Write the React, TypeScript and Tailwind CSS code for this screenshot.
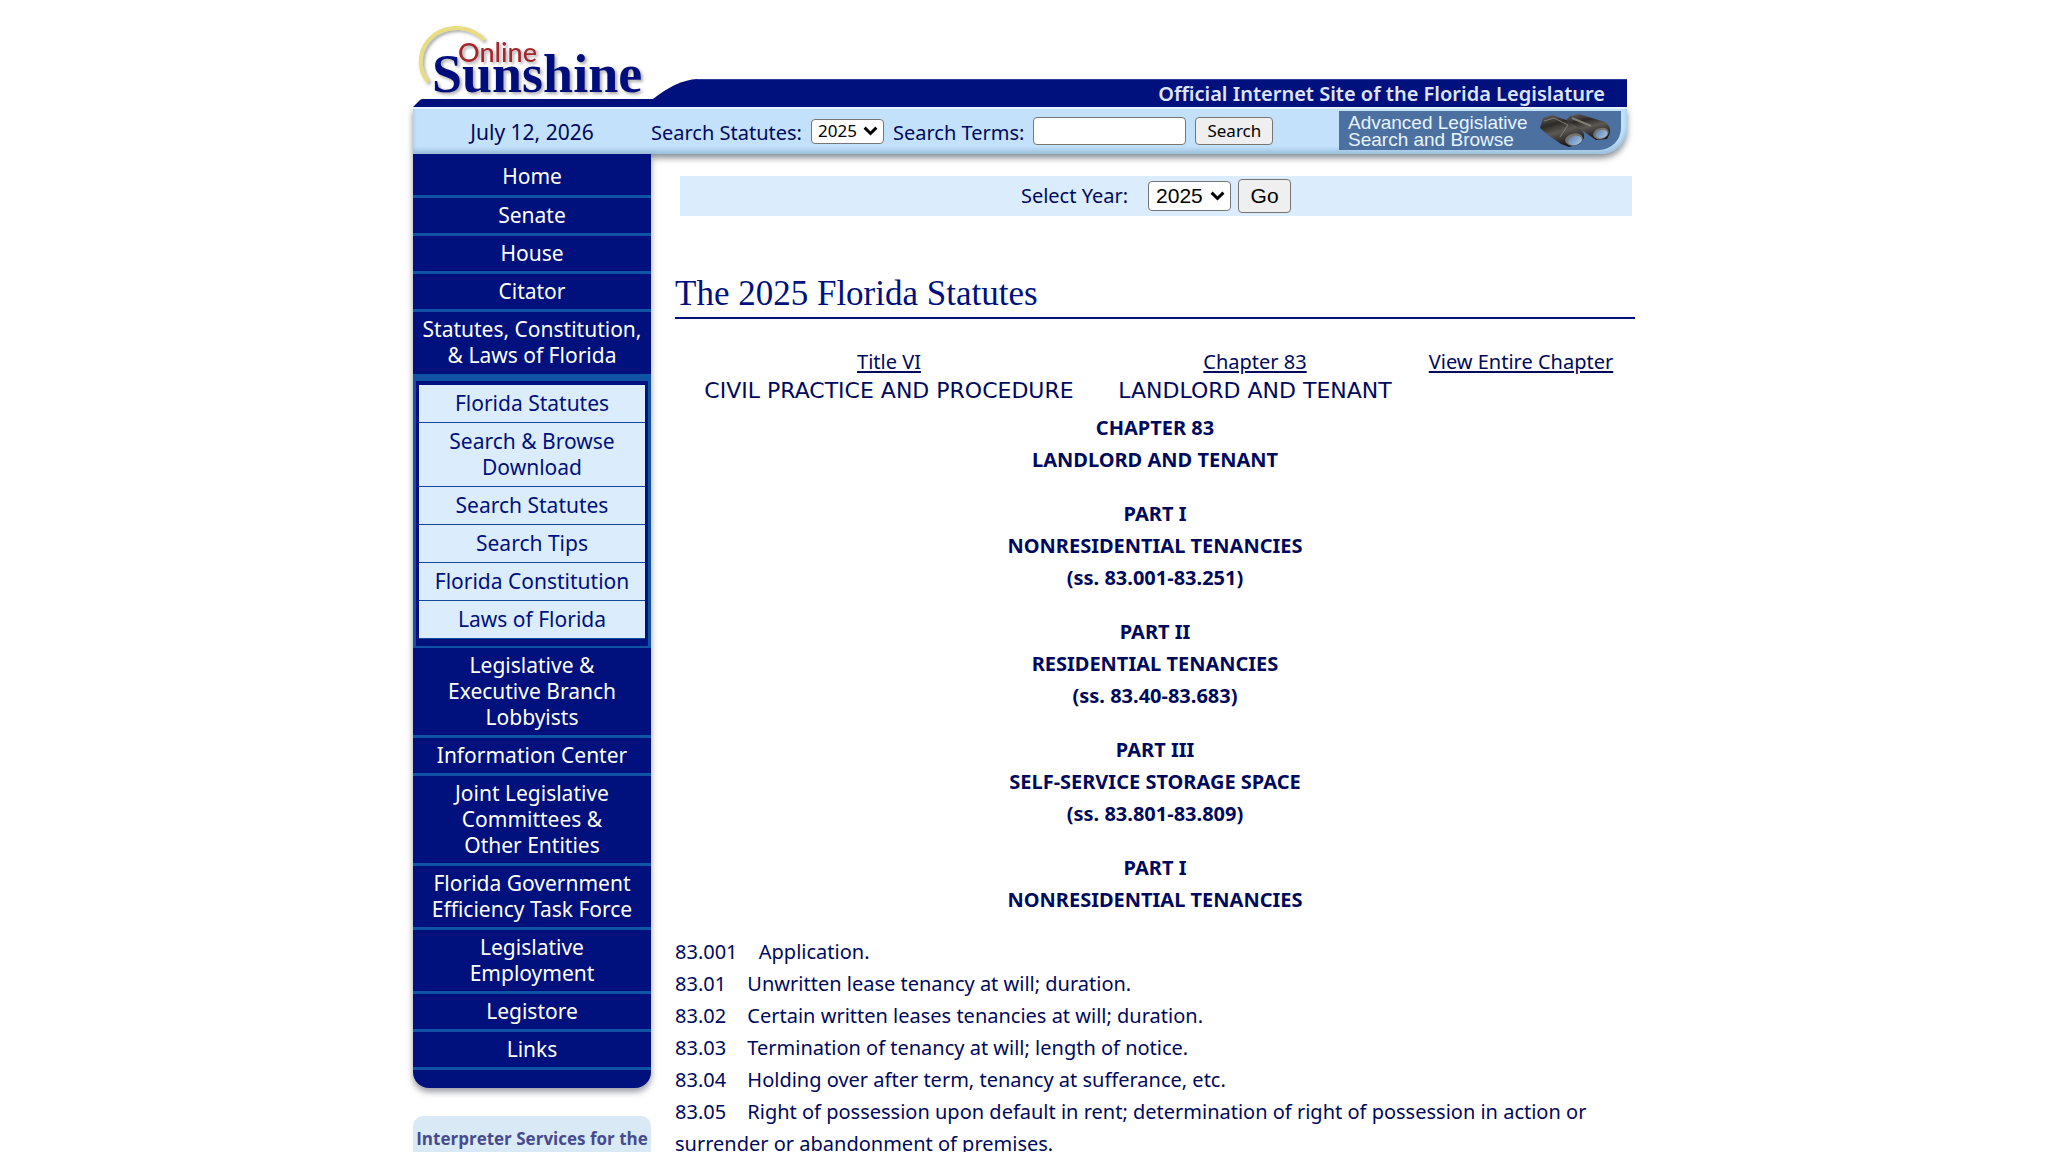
import type { ReactNode } from 'react';

const navTop: ReactNode[] = ['Senate', 'House', 'Citator'];
const subNav: ReactNode[] = [
  'Florida Statutes',
  <>Search &amp; Browse<br />Download</>,
  'Search Statutes',
  'Search Tips',
  'Florida Constitution',
  'Laws of Florida',
];
const navBottom: ReactNode[] = [
  <>Legislative &amp;<br />Executive Branch<br />Lobbyists</>,
  'Information Center',
  <>Joint Legislative<br />Committees &amp;<br />Other Entities</>,
  <>Florida Government<br />Efficiency Task Force</>,
  <>Legislative<br />Employment</>,
  'Legistore',
  'Links',
];
const parts: string[][] = [
  ['CHAPTER 83', 'LANDLORD AND TENANT'],
  ['PART I', 'NONRESIDENTIAL TENANCIES', '(ss. 83.001-83.251)'],
  ['PART II', 'RESIDENTIAL TENANCIES', '(ss. 83.40-83.683)'],
  ['PART III', 'SELF-SERVICE STORAGE SPACE', '(ss. 83.801-83.809)'],
  ['PART I', 'NONRESIDENTIAL TENANCIES'],
];
const sections: [string, string][] = [
  ['83.001', 'Application.'],
  ['83.01', 'Unwritten lease tenancy at will; duration.'],
  ['83.02', 'Certain written leases tenancies at will; duration.'],
  ['83.03', 'Termination of tenancy at will; length of notice.'],
  ['83.04', 'Holding over after term, tenancy at sufferance, etc.'],
  ['83.05', 'Right of possession upon default in rent; determination of right of possession in action or surrender or abandonment of premises.'],
];

function Chevron({ className }: { className: string }) {
  return (
    <svg viewBox="0 0 14 9" className={className} aria-hidden="true">
      <path d="M1.5 1.5 7 7l5.500-5.500" fill="none" stroke="#000" strokeWidth="2.800" />
    </svg>
  );
}

function YearSelect({ id, small }: { id: string; small?: boolean }) {
  return (
    <span className="relative inline-flex items-center">
      <select
        id={id}
        defaultValue="2025"
        className={
          small
            ? 'h-[25px] w-[73px] appearance-none rounded border border-[#767676] bg-white pl-[6px] font-["Noto_Sans",sans-serif] text-[17px] leading-5 text-black'
            : 'h-[30px] w-[83px] appearance-none rounded border border-[#767676] bg-white pl-[7px] font-["Liberation_Sans",sans-serif] text-[21px] leading-6 text-black'
        }
      >
        <option>2025</option>
        <option>2024</option>
        <option>2023</option>
      </select>
      <Chevron className="pointer-events-none absolute right-[6px] w-[15px]" />
    </span>
  );
}

function Logo() {
  return (
    <svg viewBox="0 0 240 80" className="block h-20 w-60 overflow-visible" role="img" aria-label="Online Sunshine">
      <defs>
        <filter id="soft" x="-10%" y="-20%" width="120%" height="150%">
          <feDropShadow dx="2" dy="2" stdDeviation="1.500" floodColor="#555" floodOpacity="0.5" />
        </filter>
      </defs>
      <g filter="url(#soft)">
        <path d="M15 63C3 48 6 28 21 16C37 5 58 7 71 21" fill="none" stroke="#e9dd84" strokeWidth="4" />
        <text x="45" y="43" fill="#a3282d" fontFamily="Lato, sans-serif" fontSize="27" fontWeight="500">Online</text>
        <text x="19" y="73" fill="#00107c" fontFamily="Liberation Serif, serif" fontSize="54" fontWeight="700">Sunshine</text>
      </g>
    </svg>
  );
}

function Binoculars() {
  return (
    <svg viewBox="0 0 72 34" className="h-[34px] w-[72px] shrink-0" aria-hidden="true">
      <defs>
        <linearGradient id="barrel" x1="0" y1="0" x2="0.400" y2="1">
          <stop offset="0" stopColor="#6b6762" />
          <stop offset="0.350" stopColor="#2c2927" />
          <stop offset="0.600" stopColor="#5c5853" />
          <stop offset="1" stopColor="#1d1b1a" />
        </linearGradient>
        <linearGradient id="lens" x1="0" y1="0" x2="1" y2="1">
          <stop offset="0" stopColor="#5f7fae" />
          <stop offset="1" stopColor="#a9c8ea" />
        </linearGradient>
      </defs>
      <path d="M26 7l5-5 9-2 26 8q6 4 5 11l-3 6-11 1-13-9-12-4z" fill="url(#barrel)" />
      <path d="M1 14L4 4l9-3 14 5 13 8q6 4 5 10l-4 6-11 3-8-3L9 21z" fill="url(#barrel)" />
      <path d="M5 7l10-3 14 7-8 12" fill="none" stroke="#817c74" />
      <path d="M33 4l19 8" fill="none" stroke="#817c74" strokeWidth="2" />
      <ellipse cx="35" cy="25.500" rx="9" ry="6" fill="#77736b" transform="rotate(-12 35 25.500)" />
      <ellipse cx="36" cy="26.500" rx="7" ry="4.500" fill="url(#lens)" transform="rotate(-12 36 26.500)" />
      <ellipse cx="62" cy="19.500" rx="8" ry="5.500" fill="#77736b" transform="rotate(-18 62 19.500)" />
      <ellipse cx="62.500" cy="20" rx="6" ry="4" fill="url(#lens)" transform="rotate(-18 62.500 20)" />
    </svg>
  );
}

function Header() {
  return (
    <header className="mr-[8px]">
      <div className="flex items-end">
        <div className="shrink-0 pt-[19px]">
          <Logo />
          <svg viewBox="0 0 240 8" className="block h-2 w-60" aria-hidden="true">
            <path d="M0 8L7 1Q8 0 10 0H240V8z" fill="#00107c" />
          </svg>
        </div>
        <svg viewBox="0 0 44 28" className="block h-7 w-11 shrink-0" aria-hidden="true">
          <path d="M0 20Q24 1 44 0V28H0z" fill="#00107c" />
        </svg>
        <div className="flex h-7 grow items-center justify-end border-t border-[#2c3c96] bg-[#00107c] pr-[22px] font-['Noto_Sans',sans-serif] text-[20px] leading-6 font-semibold text-[#dfe4ff]">
          Official Internet Site of the Florida Legislature
        </div>
      </div>
      <div className="flex h-[47px] items-start rounded-br-[26px] border-t-2 border-[#e4f3fd] bg-[#c3e1fa] shadow-[0_4px_6px_rgba(60,70,80,0.6),inset_0_-4px_4px_#9dc0de]">
        <div className="w-[238px] pt-1 text-center text-[21px] leading-[38px]">July 12, 2026</div>
        <form className="flex items-center gap-[9px] pt-[3px] leading-[34px]" onSubmit={(e) => e.preventDefault()}>
          <label htmlFor="header-year" className="pt-1">Search Statutes:</label>
          <YearSelect id="header-year" small />
          <label htmlFor="terms" className="pt-1">Search Terms:</label>
          <input id="terms" type="text" className="h-[28px] w-[153px] rounded border border-[#767676] bg-white px-1 text-[17px] text-black" />
          <button type="submit" className="h-[28px] w-[78px] rounded border border-[#767676] bg-[#efefef] text-[17px] leading-6 text-black">Search</button>
        </form>
        <a href="#advanced" className="mt-[2px] mr-[6px] ml-auto flex h-[39px] w-[282px] items-center justify-between rounded-br-[22px] bg-[#4c709f] pr-[10px] pl-[9px] font-['Liberation_Sans',sans-serif] text-[19px] leading-[17px] text-[#e8f4ff]">
          <span className="whitespace-nowrap">Advanced Legislative<br />Search and Browse</span>
          <Binoculars />
        </a>
      </div>
    </header>
  );
}

function NavItem({ children, first }: { children: ReactNode; first?: boolean }) {
  return (
    <li className="border-b-[3px] border-[#1053a5]">
      <a href="#nav" className={first ? 'block pt-[9px] pb-[6px]' : 'block pt-1 pb-[5px]'}>{children}</a>
    </li>
  );
}

function Sidebar() {
  return (
    <aside className="w-[238px] shrink-0 text-center text-[21px] leading-[26px]">
      <nav className="relative rounded-b-[16px] bg-[#00107c] pb-[18px] text-white shadow-[0_4px_6px_rgba(60,60,80,0.5)]">
        <ul>
          <NavItem first>Home</NavItem>
          {navTop.map((item, i) => <NavItem key={i}>{item}</NavItem>)}
          <li>
            <a href="#statutes" className="block whitespace-nowrap pt-1 pb-[6px]">Statutes, Constitution,<br />&amp; Laws of Florida</a>
            <ul className="border-x-[3px] border-t-[7px] border-b-2 border-[#1053a5] px-[3px] pt-1 pb-[7px] text-[#00107c]">
              {subNav.map((item, i) => (
                <li key={i} className="border-b border-[#124a98] bg-[#dbedfc]">
                  <a href="#sub" className="block pt-[5px] pb-[6px]">{item}</a>
                </li>
              ))}
            </ul>
          </li>
          {navBottom.map((item, i) => <NavItem key={i}>{item}</NavItem>)}
        </ul>
      </nav>
      <a href="#interpreter" className="mt-[28px] block rounded-[10px] bg-[#d9eaf6] pt-[11px] pb-3 font-['Open_Sans',sans-serif] text-[17px] leading-6 font-bold whitespace-nowrap text-[#474a8c]">
        Interpreter Services for the
      </a>
    </aside>
  );
}

export default function App() {
  return (
    <div className="min-h-screen bg-white px-4 font-['Noto_Sans',sans-serif] text-[20px] text-[#00095c]">
      <div className="mx-auto max-w-[1222px]">
        <Header />
        <div className="flex gap-6">
          <Sidebar />
          <main className="min-w-0 grow pt-[22px]">
            <form className="mr-[3px] ml-[5px] flex h-10 items-center justify-center bg-[#dbedfc]" onSubmit={(e) => e.preventDefault()}>
              <label htmlFor="main-year" className="mr-5">Select Year:</label>
              <YearSelect id="main-year" />
              <button type="submit" className="ml-[7px] h-[34px] w-[53px] rounded border border-[#767676] bg-[#efefef] font-['Liberation_Sans',sans-serif] text-[21px] text-black">Go</button>
            </form>
            <h1 className="mt-[57px] border-b-2 border-[#00107c] pb-[2px] font-['Liberation_Serif',serif] text-[35px] leading-[42px] text-[#00107c]">The 2025 Florida Statutes</h1>
            <table className="mt-[28px] w-full text-center leading-[29px]">
              <tbody>
                <tr>
                  <td className="w-[428px]"><a href="#title" className="underline decoration-2 underline-offset-2">Title VI</a></td>
                  <td><a href="#chapter" className="underline decoration-2 underline-offset-2">Chapter 83</a></td>
                  <td className="w-[228px]"><a href="#entire" className="underline decoration-2 underline-offset-2">View Entire Chapter</a></td>
                </tr>
                <tr className="font-['DejaVu_Sans',sans-serif] text-[22px] whitespace-nowrap">
                  <td>CIVIL PRACTICE AND PROCEDURE</td>
                  <td>LANDLORD AND TENANT</td>
                  <td />
                </tr>
              </tbody>
            </table>
            <div className="mt-[7px] flex flex-col gap-[22px] text-center leading-8 font-bold">
              {parts.map((lines, i) => (
                <div key={i}>{lines.map((l) => <p key={l}>{l}</p>)}</div>
              ))}
            </div>
            <div className="mt-[20px] leading-8">
              {sections.map(([n, t]) => (
                <p key={n}><a href="#section" className="mr-4">{n}</a> {t}</p>
              ))}
            </div>
          </main>
        </div>
      </div>
    </div>
  );
}
